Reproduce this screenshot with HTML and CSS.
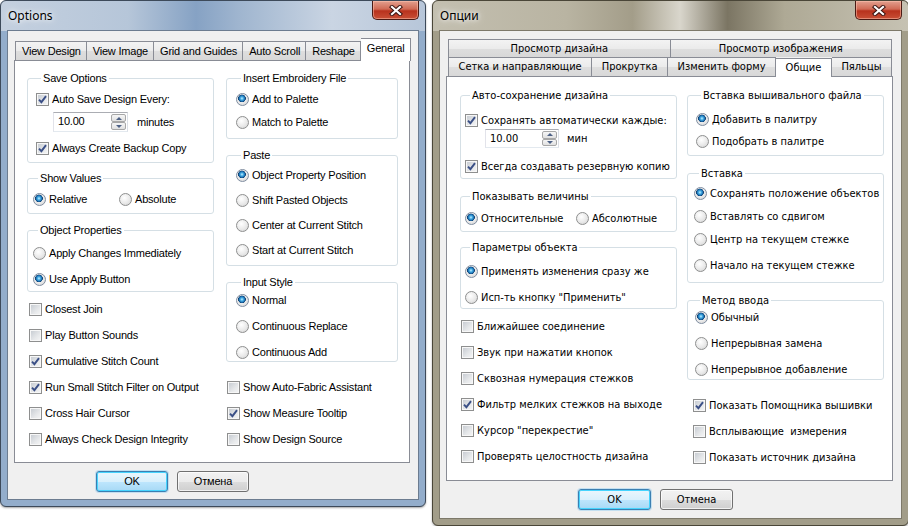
FILE: index.html
```html
<!DOCTYPE html>
<html lang="ru">
<head>
    <meta charset="UTF-8">
    <title>Options</title>
    <link rel="stylesheet" href="styles.css">
</head>
<body>
    <!-- общие значки: галочка и крестик -->
    <svg class="defs" width="0" height="0">
        <symbol id="tick" viewBox="0 0 11 11">
            <path d="M2 5.6 L4.4 8.2 L9 2.2" fill="none" stroke="#3a4f86" stroke-width="1.9"/>
        </symbol>
        <symbol id="cross" viewBox="0 0 14 11">
            <path d="M3 2 L11 9 M11 2 L3 9" stroke="#3b1512" stroke-width="4.2" stroke-linecap="square"/>
            <path d="M3 2 L11 9 M11 2 L3 9" stroke="#fff" stroke-width="2.2" stroke-linecap="square"/>
        </symbol>
    </svg>

    <div class="desk">
        <!-- English dialog -->
        <div class="win win-en">
            <div class="titlebar">
                <span class="title">Options</span>
                <span class="close"><svg width="14" height="11"><use href="#cross"/></svg></span>
            </div>
            <div class="client">
                <div class="tabs">
                    <div class="tab">View Design</div>
                    <div class="tab">View Image</div>
                    <div class="tab">Grid and Guides</div>
                    <div class="tab">Auto Scroll</div>
                    <div class="tab">Reshape</div>
                    <div class="tab on">General</div>
                </div>
                <div class="panel">
                    <div class="col col-a">
                        <fieldset class="grp save">
                            <legend>Save Options</legend>
                            <div class="opt"><span class="chk on"><svg width="11" height="11"><use href="#tick"/></svg></span>Auto Save Design Every:</div>
                            <div class="spin-row">
                                <span class="spin"><span class="spin-val">10.00</span><span class="spin-btns"><i class="up"></i><i class="dn"></i></span></span>
                                <span>minutes</span>
                            </div>
                            <div class="opt"><span class="chk on"><svg width="11" height="11"><use href="#tick"/></svg></span>Always Create Backup Copy</div>
                        </fieldset>
                        <fieldset class="grp values">
                            <legend>Show Values</legend>
                            <div class="pair">
                                <div class="opt"><span class="rad on"></span>Relative</div>
                                <div class="opt"><span class="rad"></span>Absolute</div>
                            </div>
                        </fieldset>
                        <fieldset class="grp props">
                            <legend>Object Properties</legend>
                            <div class="opt"><span class="rad"></span>Apply Changes Immediately</div>
                            <div class="opt"><span class="rad on"></span>Use Apply Button</div>
                        </fieldset>
                        <div class="checks">
                            <div class="opt"><span class="chk"></span>Closest Join</div>
                            <div class="opt"><span class="chk"></span>Play Button Sounds</div>
                            <div class="opt"><span class="chk on"><svg width="11" height="11"><use href="#tick"/></svg></span>Cumulative Stitch Count</div>
                            <div class="opt"><span class="chk on"><svg width="11" height="11"><use href="#tick"/></svg></span>Run Small Stitch Filter on Output</div>
                            <div class="opt"><span class="chk"></span>Cross Hair Cursor</div>
                            <div class="opt"><span class="chk"></span>Always Check Design Integrity</div>
                        </div>
                    </div>
                    <div class="col col-b">
                        <fieldset class="grp insert">
                            <legend>Insert Embroidery File</legend>
                            <div class="opt"><span class="rad on"></span>Add to Palette</div>
                            <div class="opt"><span class="rad"></span>Match to Palette</div>
                        </fieldset>
                        <fieldset class="grp paste">
                            <legend>Paste</legend>
                            <div class="opt"><span class="rad on"></span>Object Property Position</div>
                            <div class="opt"><span class="rad"></span>Shift Pasted Objects</div>
                            <div class="opt"><span class="rad"></span>Center at Current Stitch</div>
                            <div class="opt"><span class="rad"></span>Start at Current Stitch</div>
                        </fieldset>
                        <fieldset class="grp input">
                            <legend>Input Style</legend>
                            <div class="opt"><span class="rad on"></span>Normal</div>
                            <div class="opt"><span class="rad"></span>Continuous Replace</div>
                            <div class="opt"><span class="rad"></span>Continuous Add</div>
                        </fieldset>
                        <div class="checks">
                            <div class="opt"><span class="chk"></span>Show Auto-Fabric Assistant</div>
                            <div class="opt"><span class="chk on"><svg width="11" height="11"><use href="#tick"/></svg></span>Show Measure Tooltip</div>
                            <div class="opt"><span class="chk"></span>Show Design Source</div>
                        </div>
                    </div>
                </div>
                <div class="btns">
                    <span class="btn default">OK</span>
                    <span class="btn">Отмена</span>
                </div>
            </div>
        </div>

        <!-- русский диалог -->
        <div class="win win-ru">
            <div class="titlebar">
                <span class="title">Опции</span>
                <span class="close"><svg width="14" height="11"><use href="#cross"/></svg></span>
            </div>
            <div class="client">
                <div class="tabs">
                    <div class="tab-row top">
                        <div class="tab">Просмотр дизайна</div>
                        <div class="tab">Просмотр изображения</div>
                    </div>
                    <div class="tab-row">
                        <div class="tab">Сетка и направляющие</div>
                        <div class="tab">Прокрутка</div>
                        <div class="tab">Изменить форму</div>
                        <div class="tab on">Общие</div>
                        <div class="tab">Пяльцы</div>
                    </div>
                </div>
                <div class="panel">
                    <div class="col col-a">
                        <fieldset class="grp save">
                            <legend>Авто-сохранение дизайна</legend>
                            <div class="opt"><span class="chk on"><svg width="11" height="11"><use href="#tick"/></svg></span>Сохранять автоматически каждые:</div>
                            <div class="spin-row">
                                <span class="spin"><span class="spin-val">10.00</span><span class="spin-btns"><i class="up"></i><i class="dn"></i></span></span>
                                <span>мин</span>
                            </div>
                            <div class="opt"><span class="chk on"><svg width="11" height="11"><use href="#tick"/></svg></span>Всегда создавать резервную копию</div>
                        </fieldset>
                        <fieldset class="grp values">
                            <legend>Показывать величины</legend>
                            <div class="pair">
                                <div class="opt"><span class="rad on"></span>Относительные</div>
                                <div class="opt"><span class="rad"></span>Абсолютные</div>
                            </div>
                        </fieldset>
                        <fieldset class="grp props">
                            <legend>Параметры объекта</legend>
                            <div class="opt"><span class="rad on"></span>Применять изменения сразу же</div>
                            <div class="opt"><span class="rad"></span>Исп-ть кнопку "Применить"</div>
                        </fieldset>
                        <div class="checks">
                            <div class="opt"><span class="chk"></span>Ближайшее соединение</div>
                            <div class="opt"><span class="chk"></span>Звук при нажатии кнопок</div>
                            <div class="opt"><span class="chk"></span>Сквозная нумерация стежков</div>
                            <div class="opt"><span class="chk on"><svg width="11" height="11"><use href="#tick"/></svg></span>Фильтр мелких стежков на выходе</div>
                            <div class="opt"><span class="chk"></span>Курсор "перекрестие"</div>
                            <div class="opt"><span class="chk"></span>Проверять целостность дизайна</div>
                        </div>
                    </div>
                    <div class="col col-b">
                        <fieldset class="grp insert">
                            <legend>Вставка вышивального файла</legend>
                            <div class="opt"><span class="rad on"></span>Добавить в палитру</div>
                            <div class="opt"><span class="rad"></span>Подобрать в палитре</div>
                        </fieldset>
                        <fieldset class="grp paste">
                            <legend>Вставка</legend>
                            <div class="opt"><span class="rad on"></span>Сохранять положение объектов</div>
                            <div class="opt"><span class="rad"></span>Вставлять со сдвигом</div>
                            <div class="opt"><span class="rad"></span>Центр на текущем стежке</div>
                            <div class="opt"><span class="rad"></span>Начало на текущем стежке</div>
                        </fieldset>
                        <fieldset class="grp input">
                            <legend>Метод ввода</legend>
                            <div class="opt"><span class="rad on"></span>Обычный</div>
                            <div class="opt"><span class="rad"></span>Непрерывная замена</div>
                            <div class="opt"><span class="rad"></span>Непрерывное добавление</div>
                        </fieldset>
                        <div class="checks">
                            <div class="opt"><span class="chk on"><svg width="11" height="11"><use href="#tick"/></svg></span>Показать Помощника вышивки</div>
                            <div class="opt"><span class="chk"></span>Всплывающие &nbsp;измерения</div>
                            <div class="opt"><span class="chk"></span>Показать источник дизайна</div>
                        </div>
                    </div>
                </div>
                <div class="btns">
                    <span class="btn default">OK</span>
                    <span class="btn">Отмена</span>
                </div>
            </div>
        </div>
    </div>
</body>
</html>
```

FILE: styles.css
```css
body {
    margin: 0;
    background: #fff;
    color: #000;
    font-family: "Liberation Sans", Arial, sans-serif;
    font-size: 11px;
}
.defs {
    display: block;
    height: 0;
    overflow: hidden;
}
.desk {
    display: flex;
    align-items: flex-start;
    gap: 6px;
}

/* окно в стиле Aero */
.win {
    box-sizing: border-box;
    display: flex;
    flex-direction: column;
    padding: 0 6px 6px;
    border: 1px solid #3d4a5a;
    border-radius: 6px;
    box-shadow: 0 1px 2px rgba(0, 0, 0, 0.35);
    flex: none;
}
.win-en {
    width: 426px;
    height: 507px;
    letter-spacing: -0.2px;
    background:
        linear-gradient(90deg, #c4d0df 0%, #b6c6d9 30%, #86a2c4 46%, #9fb5cf 56%, #cad5e3 78%, #b7c6d9 100%) top / 100% 30px no-repeat,
        #93adcb;
}
.win-ru {
    width: 477px;
    height: 526px;
    font-family: "DejaVu Sans Condensed", "DejaVu Sans", sans-serif;
    background:
        linear-gradient(90deg, #c3bfb0 0%, #b9b4a2 28%, #a39d89 42%, #d9d6cc 52%, #7b7563 62%, #aea995 74%, #c6c2b3 100%) top / 100% 30px no-repeat,
        #a29d89;
    border-color: #4a4638;
}
.titlebar {
    height: 29px;
    display: flex;
    align-items: flex-start;
    flex: none;
    letter-spacing: 0;
}
.title {
    font-family: "Noto Sans", sans-serif;
    font-size: 12px;
    padding: 6px 0 0 1px;
    text-shadow: 0 0 8px #fff, 0 0 4px rgba(255, 255, 255, 0.8);
}
.close {
    margin-left: auto;
    width: 47px;
    height: 19px;
    box-sizing: border-box;
    display: flex;
    align-items: center;
    justify-content: center;
    border: 1px solid #4a1a14;
    border-top: 0;
    border-radius: 0 0 5px 5px;
    background: linear-gradient(#e3a08f 0%, #d06a55 45%, #b8321d 55%, #c84f36 100%);
    box-shadow: inset 0 0 0 1px rgba(255, 200, 180, 0.5);
}
.client {
    flex: 1;
    display: flex;
    flex-direction: column;
    background: #f0f0f0;
    border: 1px solid #6c7c90;
}
.win-ru .client {
    border-color: #7d796a;
}

/* вкладки */
.tabs {
    display: flex;
    align-items: flex-end;
    padding: 7px 0 0 7px;
}
.tab {
    box-sizing: border-box;
    height: 19px;
    padding: 0 5px 0 6px;
    line-height: 18px;
    text-align: center;
    white-space: nowrap;
    border: 1px solid #898c95;
    border-bottom: 0;
    background: linear-gradient(#f3f3f3 0%, #ebebeb 50%, #dedede 51%, #d8d8d8 100%);
}
.tab + .tab {
    border-left: 0;
}
.tab.on {
    position: relative;
    z-index: 1;
    height: 23px;
    margin-bottom: -1px;
    line-height: 19px;
    background: #fff;
}
.win-ru .tabs {
    flex-direction: column;
    align-items: stretch;
    width: 444px;
    padding: 8px 0 0 8px;
}
.tab-row {
    display: flex;
    align-items: flex-end;
}
.tab-row .tab {
    flex: 1 1 auto;
    padding: 0 4px;
}
.tab-row.top .tab {
    flex: 1;
    height: 18px;
    line-height: 17px;
}
.tab-row.top + .tab-row .tab {
    height: 19px;
}
.tab-row .tab.on {
    height: 22px;
    margin-top: -2px;
    line-height: 17px;
}

/* панель вкладки */
.panel {
    box-sizing: border-box;
    display: flex;
    gap: 12px;
    width: 396px;
    height: 403px;
    margin-left: 6px;
    padding: 11px 0 0 12px;
    background: #fff;
    border: 1px solid #898c95;
}
.win-ru .panel {
    width: 447px;
    height: 405px;
    gap: 10px;
    padding: 12px 0 0 13px;
}
.col {
    display: flex;
    flex-direction: column;
}
.win-en .col-a { width: 187px; }
.win-en .col-b { width: 172px; }
.win-ru .col-a { width: 217px; }
.win-ru .col-b { width: 197px; }

/* группы */
.grp {
    display: flex;
    flex-direction: column;
    min-width: 0;
    margin: 0;
    border: 1px solid #d5dfe5;
    border-radius: 3px;
}
.grp + .grp {
    margin-top: 10px;
}
.grp legend {
    margin-left: 5px;
    padding: 0 2px;
    line-height: 13px;
}
.opt {
    display: flex;
    align-items: center;
    height: 16px;
    white-space: nowrap;
}
.checks {
    display: flex;
    flex-direction: column;
    gap: 10px;
}

/* поля английского диалога */
.win-en .save { padding: 6px 4px 6px 8px; }
.win-en .spin-row { margin: 5px 0 8px; padding-left: 17px; }
.win-en .values { padding: 6px 4px 6px 5px; margin-top: 9px; }
.win-en .pair { grid-template-columns: 86px auto; }
.win-en .props { padding: 8px 4px 4px 5px; gap: 10px; }
.win-en .col-a .checks { margin-top: 9px; padding-left: 2px; }
.win-en .insert { padding: 6px 4px 8px 9px; gap: 7px; }
.win-en .paste { padding: 5px 4px 7px 9px; gap: 9px; }
.win-en .input { padding: 3px 4px 1px 9px; gap: 10px; }
.win-en .col-b .checks { margin-top: 17px; padding-left: 1px; }

/* поля русского диалога */
.win-ru .save { padding: 10px 4px 4px 4px; }
.win-ru .spin-row { height: 19px; margin: 1px 0 10px; padding-left: 20px; gap: 8px; }
.win-ru .spin { width: 74px; height: 19px; }
.win-ru .values { padding: 7px 4px 5px 4px; margin-top: 11px; }
.win-ru .pair { grid-template-columns: 111px auto; }
.win-ru .props { padding: 9px 4px 3px 4px; margin-top: 9px; gap: 10px; }
.win-ru .col-a .checks { margin-top: 9px; padding-left: 1px; }
.win-ru .insert { padding: 9px 4px 6px 8px; gap: 6px; }
.win-ru .paste { padding: 5px 4px 9px 6px; margin-top: 11px; gap: 7px; }
.win-ru .paste .opt:last-child { margin-top: 3px; }
.win-ru .input { padding: 2px 4px 2px 7px; margin-top: 11px; gap: 10px; }
.win-ru .col-b .checks { margin-top: 17px; padding-left: 6px; }

.pair {
    display: grid;
}

/* флажки и переключатели */
.chk, .rad {
    box-sizing: border-box;
    flex: none;
    width: 13px;
    height: 13px;
    margin-right: 3px;
    border: 1px solid #8e8f8f;
}
.chk {
    display: flex;
    align-items: center;
    justify-content: center;
    background: linear-gradient(135deg, #c3c8cf 0%, #e6e8ea 60%, #f6f6f7 100%);
    box-shadow: inset 0 0 0 1px #f7f7f7;
}
.rad {
    border-radius: 50%;
    background: radial-gradient(circle at 40% 35%, #ffffff 0%, #e9e9e9 55%, #cfcfcf 100%);
}
.rad.on {
    border-color: #7f8da0;
    background:
        radial-gradient(circle at 45% 40%, #c9f0ff 0px, #46aee6 1.5px, #1869aa 3px, #0d3d6e 3.6px, rgba(13, 61, 110, 0) 4.1px),
        radial-gradient(circle at 40% 35%, #ffffff 0%, #e9e9e9 55%, #cfcfcf 100%);
}

/* поле со счётчиком */
.spin-row {
    display: flex;
    align-items: center;
    gap: 9px;
    height: 20px;
}
.spin {
    box-sizing: border-box;
    display: flex;
    width: 75px;
    height: 20px;
    background: #fff;
    border: 1px solid;
    border-color: #abadb3 #dbdfe6 #e3e9ef #e2e3ea;
}
.spin-val {
    padding-left: 4px;
    line-height: 17px;
}
.spin-btns {
    margin-left: auto;
    display: flex;
    flex-direction: column;
    width: 17px;
    padding: 1px;
    box-sizing: border-box;
}
.spin-btns i {
    flex: 1;
    display: flex;
    align-items: center;
    justify-content: center;
    border: 1px solid #a7a7a7;
    border-radius: 2px;
    background: linear-gradient(#f6f6f6, #e0e0e0);
}
.spin-btns i::after {
    content: "";
    border-left: 3px solid transparent;
    border-right: 3px solid transparent;
}
.spin-btns .up::after {
    border-bottom: 3px solid #4d6185;
}
.spin-btns .dn::after {
    border-top: 3px solid #4d6185;
}

/* кнопки */
.btns {
    display: flex;
    gap: 9px;
    margin-top: 8px;
    padding-left: 88px;
}
.win-ru .btns {
    padding-left: 138px;
}
.btn {
    box-sizing: border-box;
    width: 72px;
    height: 21px;
    line-height: 19px;
    text-align: center;
    border: 1px solid #707070;
    border-radius: 3px;
    background: linear-gradient(#f2f2f2 0%, #ebebeb 50%, #dddddd 51%, #cfcfcf 100%);
    box-shadow: inset 0 0 0 1px rgba(255, 255, 255, 0.7);
}
.win-ru .btn {
    width: 73px;
}
.btn.default {
    border-color: #3c7fb1;
    background: linear-gradient(#eaf6fd 0%, #d9f0fc 50%, #bee6fd 51%, #a7d9f5 100%);
    box-shadow: inset 0 0 0 1px #46d4fe, 0 0 0 1px rgba(60, 170, 240, 0.25);
}
```
